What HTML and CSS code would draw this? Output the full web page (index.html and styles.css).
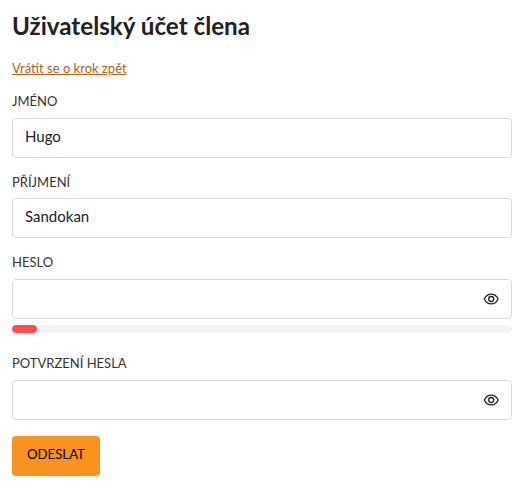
FILE: index.html
```html
<!DOCTYPE html>
<html lang="cs">

<head>
    <meta charset="UTF-8">
    <meta name="viewport" content="width=device-width, initial-scale=1.0">
    <title>Uživatelský účet člena</title>
    <link rel="stylesheet" href="styles.css">
</head>

<body>
    <h1>Uživatelský účet člena</h1>
    <a class="back-link" href="#">Vrátit se o krok zpět</a>

    <form id="account-form">
        <div class="form-control">
            <label for="name">Jméno</label>
            <input type="text" id="name" value="Hugo">
        </div>

        <div class="form-control">
            <label for="surname">Příjmení</label>
            <input type="text" id="surname" value="Sandokan">
        </div>

        <div class="form-control form-control-password">
            <label for="password">Heslo</label>
            <div class="password-box">
                <input type="password" id="password">
                <button type="button" class="toggle" aria-label="Zobrazit heslo">
                    <svg viewBox="0 0 16 16" width="16" height="16">
                        <path d="M1.3 8s2.3-4.9 6.9-4.9S15.1 8 15.1 8s-2.3 4.9-6.9 4.9S1.3 8 1.3 8z" />
                        <circle cx="8.2" cy="8" r="2.5" />
                    </svg>
                </button>
            </div>
            <div class="strength">
                <div class="strength-bar" style="width: 5%"></div>
            </div>
        </div>

        <div class="form-control">
            <label for="password-confirm">Potvrzení hesla</label>
            <div class="password-box">
                <input type="password" id="password-confirm">
                <button type="button" class="toggle" aria-label="Zobrazit heslo">
                    <svg viewBox="0 0 16 16" width="16" height="16">
                        <path d="M1.3 8s2.3-4.9 6.9-4.9S15.1 8 15.1 8s-2.3 4.9-6.9 4.9S1.3 8 1.3 8z" />
                        <circle cx="8.2" cy="8" r="2.5" />
                    </svg>
                </button>
            </div>
        </div>

        <button type="submit" class="btn">Odeslat</button>
    </form>
</body>

</html>
```

FILE: styles.css
```css
* {
    box-sizing: border-box;
}

body {
    margin: 0;
    padding: 11px 13px 0 12px;
    background-color: #fff;
    color: #212121;
    font-family: Lato, sans-serif;
    font-size: 16px;
    line-height: 24px;
}

h1 {
    margin: 0 0 16px;
    font-size: 24.2px;
    font-weight: 700;
    line-height: 29px;
}

.back-link {
    display: block;
    width: max-content;
    color: #b36214;
    font-size: 13px;
    line-height: 24px;
}

form {
    margin-top: 9.4px;
}

.form-control {
    margin-bottom: 12px;
}

.form-control label {
    display: block;
    height: 28.4px;
    color: #333;
    font-size: 13px;
    line-height: 25.6px;
    text-transform: uppercase;
}

.form-control input {
    display: block;
    width: 100%;
    height: 40px;
    padding: 0 12px 4px;
    border: 1px solid #d9d9d9;
    border-radius: 4px;
    background-color: #fff;
    color: #212121;
    font-family: inherit;
    font-size: 15px;
}

.form-control-password {
    margin-bottom: 18.6px;
}

.password-box {
    position: relative;
}

.toggle {
    position: absolute;
    top: 12px;
    right: 13px;
    padding: 0;
    border: none;
    background: none;
    cursor: pointer;
}

.toggle svg {
    display: block;
    fill: none;
    stroke: #212121;
    stroke-width: 1.3;
}

.strength {
    height: 8px;
    margin-top: 6px;
    border-radius: 4px;
    background-color: #f5f5f5;
    overflow: hidden;
}

.strength-bar {
    height: 100%;
    border-radius: 4px;
    background-color: #ff4d4f;
}

.btn {
    display: block;
    height: 40px;
    margin-top: 16px;
    padding: 0 15px 4px;
    border: none;
    border-radius: 4px;
    background-color: #f8931f;
    color: #000;
    font-family: inherit;
    font-size: 13.2px;
    text-transform: uppercase;
    cursor: pointer;
}
```
